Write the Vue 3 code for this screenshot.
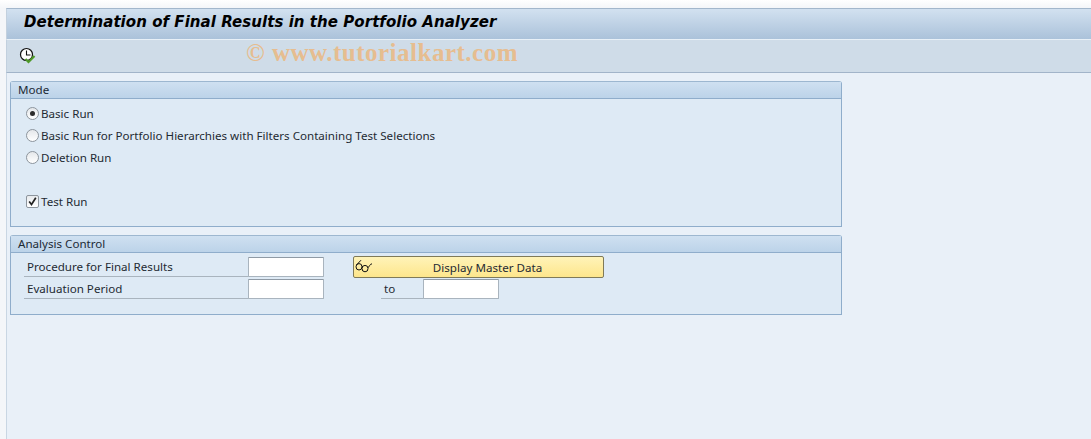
<script setup>
const modes = [
  { label: 'Basic Run', on: true },
  { label: 'Basic Run for Portfolio Hierarchies with Filters Containing Test Selections', on: false },
  { label: 'Deletion Run', on: false }
]
</script>

<template>
  <div class="page">
    <header class="titlebar"><h1>Determination of Final Results in the Portfolio Analyzer</h1></header>
    <div class="toolbar">
      <svg class="clock" width="18" height="18" viewBox="0 0 18 18">
        <circle cx="7.5" cy="7.5" r="6" fill="#fff" stroke="#111" stroke-width="1.2"/>
        <path d="M7.5 3.5V8H11.5" fill="none" stroke="#111" stroke-width="1.1"/>
        <path d="M6.5 12l3 3 6-6" fill="none" stroke="#4e9a28" stroke-width="2.2"/>
      </svg>
      <span class="watermark">© www.tutorialkart.com</span>
    </div>
    <main class="content">
      <section class="group mode">
        <div class="group-head">Mode</div>
        <div class="mode-body">
          <label v-for="m in modes" :key="m.label" class="option">
            <span class="radio" :class="{ on: m.on }"></span><span class="txt">{{ m.label }}</span>
          </label>
          <div class="option spacer"></div>
          <label class="option check-row">
            <span class="check">
              <svg width="11" height="11" viewBox="0 0 11 11"><path d="M2.2 5.5l2.3 3L8.8 1.8" fill="none" stroke="#222" stroke-width="1.7"/></svg>
            </span><span class="txt">Test Run</span>
          </label>
        </div>
      </section>
      <section class="group analysis">
        <div class="group-head">Analysis Control</div>
        <div class="form">
          <div class="row">
            <span class="lbl wide">Procedure for Final Results</span>
            <span class="input"></span>
            <button class="btn">
              <svg class="glasses" width="20" height="16" viewBox="0 0 20 16">
                <g fill="none" stroke="#111" stroke-width="1">
                  <ellipse cx="5" cy="9.8" rx="3" ry="3.2"/>
                  <ellipse cx="11" cy="11.6" rx="3" ry="3.2"/>
                  <path d="M2.5 8L7 3.2M7.8 9l1.2 1.2M14 10.6C15.5 10 15.5 7 18 6.8"/>
                </g>
              </svg>
              Display Master Data
            </button>
          </div>
          <div class="row">
            <span class="lbl wide">Evaluation Period</span>
            <span class="input"></span>
            <span class="lbl to">to</span>
            <span class="input"></span>
          </div>
        </div>
      </section>
    </main>
  </div>
</template>

<style>
html, body { margin: 0; background: #fff; overflow: hidden; }
</style>

<style scoped>
.page {
  width: 1091px;
  height: 439px;
  box-sizing: border-box;
  padding: 8px 0 0 6px;
  background: linear-gradient(#ffffff, #f4f6f9 8px);
  font-family: "Noto Sans", sans-serif;
  font-size: 11.6px;
  color: #1f2a33;
  overflow: hidden;
  display: flex;
  flex-direction: column;
}
.titlebar {
  height: 30px;
  flex: none;
  display: flex;
  align-items: flex-start;
  padding-left: 17px;
  border-top: 1px solid #a3b7cc;
  border-left: 1px solid #c2d0de;
  border-bottom: 1px solid #e8f0f7;
  background: linear-gradient(#d2e1f0, #abc2da);
}
h1 {
  margin: 0;
  font-size: 15px;
  line-height: 27px;
  font-style: italic;
  font-weight: 700;
  color: #000;
  font-family: "DejaVu Sans", Verdana, sans-serif;
  letter-spacing: 0.05px;
  white-space: nowrap;
}
.toolbar {
  height: 32px;
  flex: none;
  position: relative;
  display: flex;
  align-items: center;
  padding-left: 12px;
  background: #cfdce8;
  border-left: 1px solid #c2d0de;
  border-bottom: 1px solid #a2b4c9;
}
.watermark {
  position: absolute;
  left: 239px;
  top: 0;
  line-height: 26px;
  font-family: "Liberation Serif", serif;
  font-weight: 700;
  font-size: 25px;
  letter-spacing: 0.5px;
  color: #e6bd90;
  white-space: nowrap;
  height: 26px;
}
.content {
  flex: 1;
  padding: 8px 0 0 3px;
  background: #e9f0f8;
  border-left: 1px solid #c9d6e3;
  display: flex;
  flex-direction: column;
  gap: 8px;
}
.group {
  width: 832px;
  box-sizing: border-box;
  border: 1px solid #8fadcb;
  border-top-color: #9db7d0;
  border-radius: 3px 3px 0 0;
  background: #deeaf5;
  flex: none;
}
.group-head {
  height: 17px;
  line-height: 15px;
  box-sizing: border-box;
  padding-left: 7px;
  border-bottom: 1px solid #8fadcb;
  background: linear-gradient(#cfe0f1, #bcd3e9);
  color: #1c2a36;
}
.mode { height: 146px; }
.analysis { height: 80px; }
.mode-body {
  padding: 4px 0 0 15px;
  display: flex;
  flex-direction: column;
}
.option {
  height: 22px;
  display: flex;
  align-items: center;
  white-space: nowrap;
}
.txt { line-height: 20px; height: 20px; }
.radio {
  width: 13px;
  height: 13px;
  margin-top: -1px;
  box-sizing: border-box;
  border: 1px solid #8d959d;
  border-radius: 50%;
  background: linear-gradient(#e4e7ea, #fff);
  margin-right: 2px;
  display: flex;
  align-items: center;
  justify-content: center;
}
.radio.on::after {
  content: "";
  width: 5px;
  height: 5px;
  border-radius: 50%;
  background: #2b2b2b;
}
.check {
  width: 13px;
  height: 13px;
  margin-top: -1px;
  box-sizing: border-box;
  border: 1px solid #8d959d;
  border-radius: 2px;
  background: linear-gradient(#e8ebee, #fff);
  margin-right: 2px;
  display: flex;
  align-items: center;
  justify-content: center;
}
.form {
  padding: 4px 0 0 13px;
  display: flex;
  flex-direction: column;
  gap: 2px;
}
.row {
  height: 20px;
  display: flex;
  align-items: flex-start;
}
.lbl {
  height: 20px;
  line-height: 20px;
  box-sizing: border-box;
  border-bottom: 1px solid #a9b4be;
  white-space: nowrap;
}
.lbl.wide { width: 224px; padding-left: 3px; }
.lbl.to { width: 42px; margin-left: 57px; padding-left: 3px; }
.input {
  width: 76px;
  height: 20px;
  box-sizing: border-box;
  background: #fff;
  border: 1px solid #a9b4be;
  border-top-color: #8f9aa5;
  border-radius: 1px;
}
.btn {
  margin: -1px 0 0 29px;
  width: 251px;
  height: 22px;
  box-sizing: border-box;
  position: relative;
  border: 1px solid #7f7a58;
  border-radius: 2px;
  background: linear-gradient(#fff3b8, #fde68c);
  font: inherit;
  color: #1f2a33;
  padding: 0 0 0 18px;
  text-align: center;
}
.glasses { position: absolute; left: 0; top: 0; }
</style>
